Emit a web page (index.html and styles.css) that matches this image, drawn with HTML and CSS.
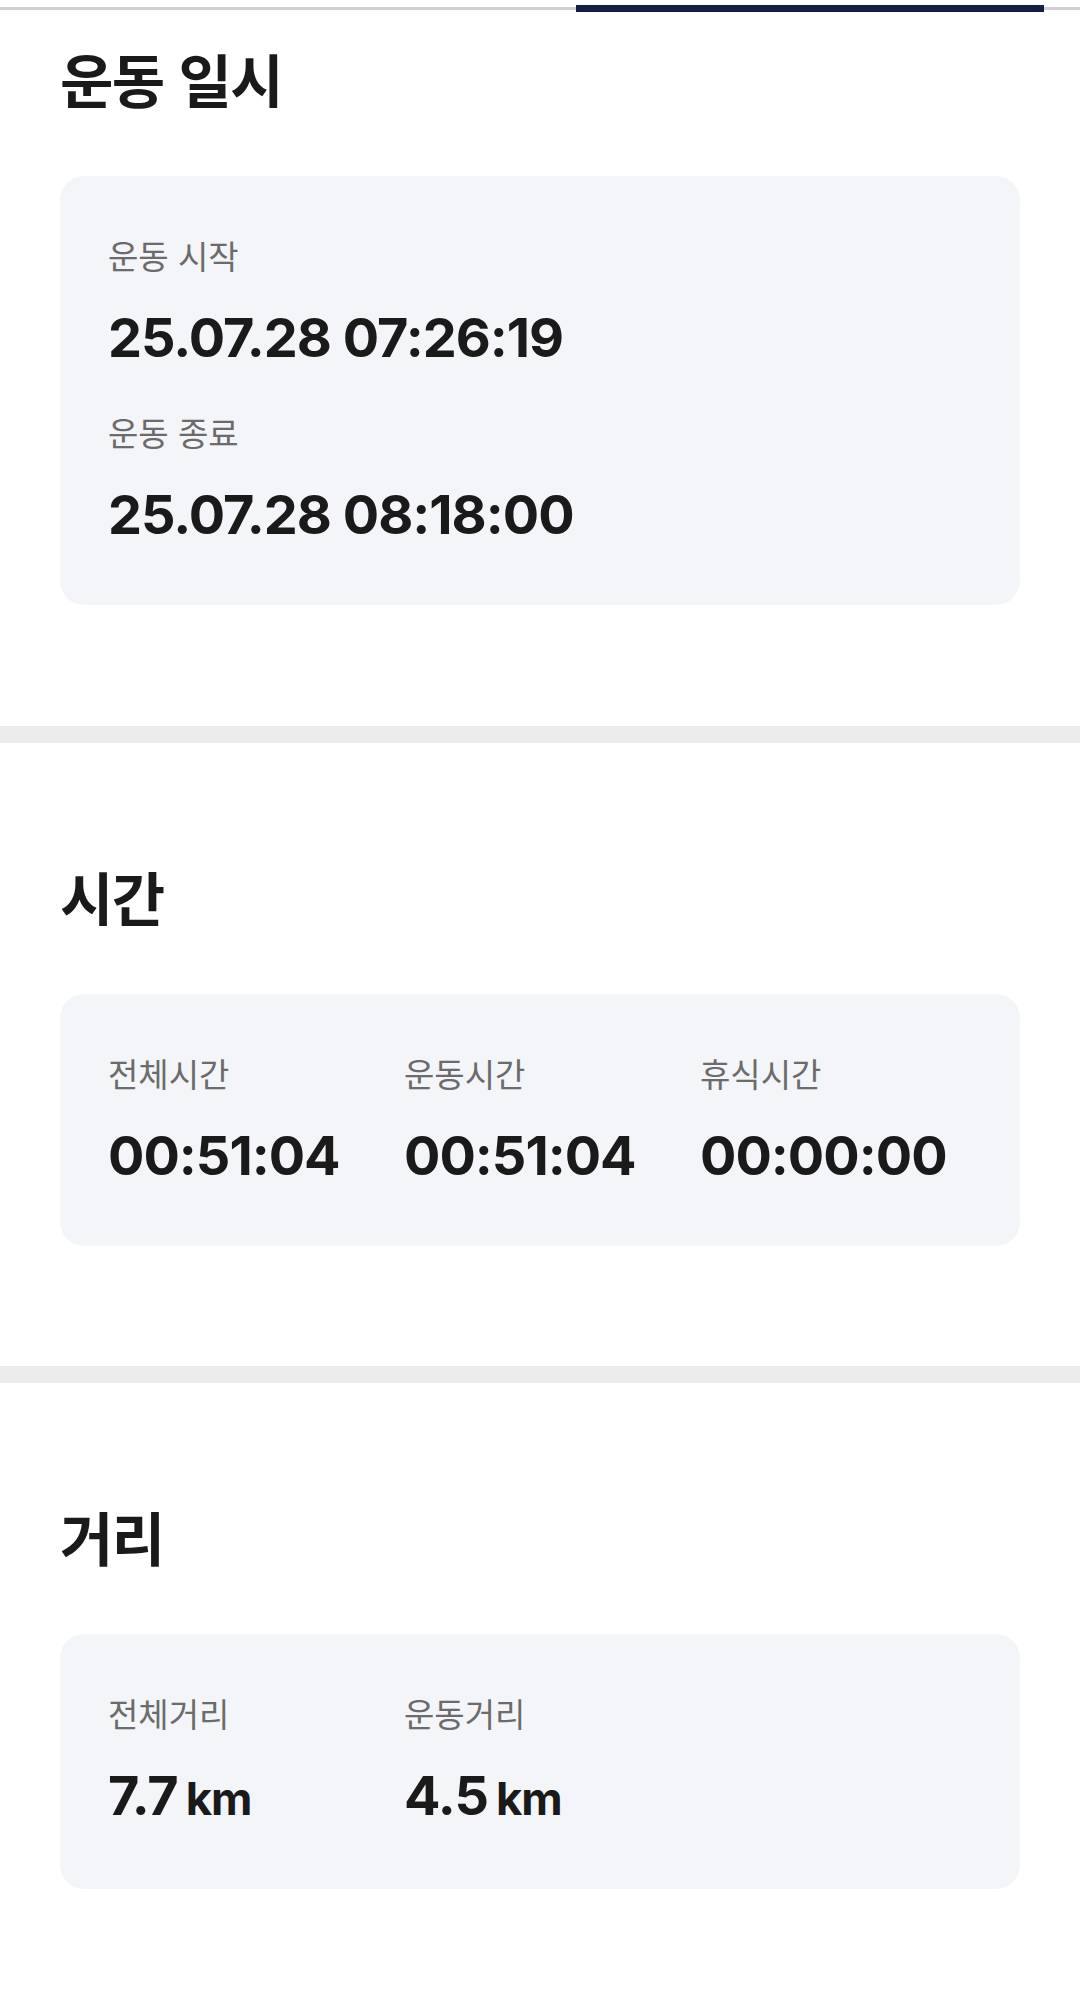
FILE: index.html
```html
<!DOCTYPE html>
<html lang="ko">
<head>
  <meta charset="UTF-8">
  <meta name="viewport" content="width=device-width, initial-scale=1.0">
  <title>운동 기록</title>
  <link rel="stylesheet" href="styles.css">
</head>
<body>

<div class="tabs">
  <span class="tab-line"></span>
  <span class="tab-indicator"></span>
  <span class="tab-line tab-line--end"></span>
</div>

<section class="section section--first">
  <h2 class="section-title">운동 일시</h2>
  <div class="card card--stack">
    <div class="stat">
      <p class="stat-label">운동 시작</p>
      <p class="stat-value">25.07.28 07:26:19</p>
    </div>
    <div class="stat">
      <p class="stat-label">운동 종료</p>
      <p class="stat-value">25.07.28 08:18:00</p>
    </div>
  </div>
</section>

<section class="section">
  <h2 class="section-title">시간</h2>
  <div class="card card--grid">
    <div class="stat">
      <p class="stat-label">전체시간</p>
      <p class="stat-value">00:51:04</p>
    </div>
    <div class="stat">
      <p class="stat-label">운동시간</p>
      <p class="stat-value">00:51:04</p>
    </div>
    <div class="stat">
      <p class="stat-label">휴식시간</p>
      <p class="stat-value">00:00:00</p>
    </div>
  </div>
</section>

<section class="section section--last">
  <h2 class="section-title">거리</h2>
  <div class="card card--grid">
    <div class="stat">
      <p class="stat-label">전체거리</p>
      <p class="stat-value">7.7<span class="unit">km</span></p>
    </div>
    <div class="stat">
      <p class="stat-label">운동거리</p>
      <p class="stat-value">4.5<span class="unit">km</span></p>
    </div>
  </div>
</section>

</body>
</html>
```

FILE: styles.css
```css
body {
  margin: 0;
  background: #ffffff;
  color: #1a1a1a;
  font-family: 'Noto Sans CJK KR', sans-serif;
}
p, h2 {
  margin: 0;
}

/* tab bar (only the underline is visible) */
.tabs {
  display: flex;
  align-items: center;
  height: 7px;
  margin-top: 5px;
}
.tab-line {
  flex: 1;
  height: 3px;
  background: #cfcfd4;
}
.tab-line--end {
  flex: 0 0 36px;
}
.tab-indicator {
  width: 468px;
  height: 7px;
  background: #131d45;
}

.section {
  padding: 124px 60px 120px;
  border-bottom: 17px solid #ebebeb;
}
.section--first {
  padding-top: 37px;
  padding-bottom: 121px;
}
.section--last {
  border-bottom: none;
  padding-bottom: 108px;
}
.section-title {
  font-size: 58px;
  line-height: 58px;
  font-weight: 700;
  letter-spacing: -1.5px;
  margin-bottom: 69px;
}

.card {
  background: #f4f5f8;
  border-radius: 24px;
  padding: 61px 48px 58px;
}
.card--stack {
  display: flex;
  flex-direction: column;
  gap: 44px;
}
.card--grid {
  display: grid;
  grid-template-columns: repeat(3, 1fr);
  column-gap: 24px;
}

.stat-label {
  font-size: 33px;
  line-height: 36px;
  color: #6b6b6b;
  margin-bottom: 32px;
}
.stat-value {
  font-family: Inter, 'Noto Sans CJK KR', sans-serif;
  font-size: 54px;
  line-height: 65px;
  font-weight: 700;
  letter-spacing: -1px;
  color: #1a1a1a;
}
.unit {
  margin-left: 8px;
  font-size: 0.84em;
  letter-spacing: -1px;
}
```
